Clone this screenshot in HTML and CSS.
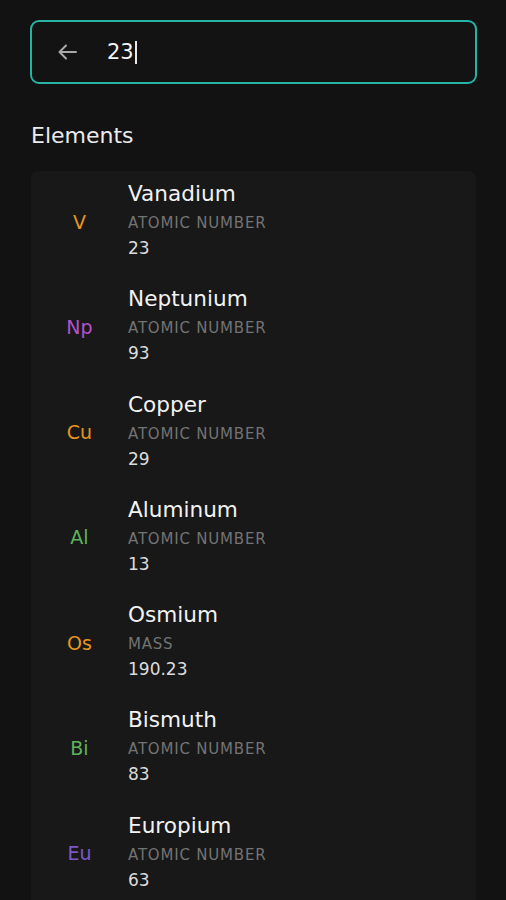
FILE: index.html
```html
<!DOCTYPE html>
<html lang="en">
<head>
<meta charset="utf-8">
<title>Elements search</title>
<link rel="stylesheet" href="styles.css">
</head>
<body>
<div class="page">
  <div class="search">
    <svg class="back" width="22" height="22" viewBox="0 0 22 22" aria-hidden="true">
      <path d="M20 11H3.5M10 4.5L3.5 11L10 17.5" fill="none" stroke="#a9a9a9" stroke-width="2" stroke-linecap="round" stroke-linejoin="round"/>
    </svg>
    <div class="query">23<span class="caret"></span></div>
  </div>

  <h2 class="heading">Elements</h2>

  <div class="card">
    <div class="row">
      <div class="sym orange">V</div>
      <div class="info">
        <div class="name">Vanadium</div>
        <div class="label">ATOMIC NUMBER</div>
        <div class="value">23</div>
      </div>
    </div>
    <div class="row">
      <div class="sym purple">Np</div>
      <div class="info">
        <div class="name">Neptunium</div>
        <div class="label">ATOMIC NUMBER</div>
        <div class="value">93</div>
      </div>
    </div>
    <div class="row">
      <div class="sym orange">Cu</div>
      <div class="info">
        <div class="name">Copper</div>
        <div class="label">ATOMIC NUMBER</div>
        <div class="value">29</div>
      </div>
    </div>
    <div class="row">
      <div class="sym green">Al</div>
      <div class="info">
        <div class="name">Aluminum</div>
        <div class="label">ATOMIC NUMBER</div>
        <div class="value">13</div>
      </div>
    </div>
    <div class="row">
      <div class="sym orange">Os</div>
      <div class="info">
        <div class="name">Osmium</div>
        <div class="label">MASS</div>
        <div class="value">190.23</div>
      </div>
    </div>
    <div class="row">
      <div class="sym green">Bi</div>
      <div class="info">
        <div class="name">Bismuth</div>
        <div class="label">ATOMIC NUMBER</div>
        <div class="value">83</div>
      </div>
    </div>
    <div class="row">
      <div class="sym violet">Eu</div>
      <div class="info">
        <div class="name">Europium</div>
        <div class="label">ATOMIC NUMBER</div>
        <div class="value">63</div>
      </div>
    </div>
  </div>
</div>
</body>
</html>
```

FILE: styles.css
```css
html, body {
  margin: 0;
  padding: 0;
  background: #121212;
  overflow: hidden;
  height: 100%;
}

body {
  font-family: "DejaVu Sans", "Noto Sans", sans-serif;
  color: #f0f0f0;
}

.page {
  padding: 20px 29px 0 30px;
}

.search {
  height: 64px;
  box-sizing: border-box;
  border: 2px solid #27b3a4;
  border-radius: 9px;
  background: #131313;
  display: flex;
  align-items: center;
  padding-left: 24px;
}

.back {
  display: block;
  flex: none;
}

.query {
  margin-left: 29px;
  font-size: 21px;
  line-height: 24px;
  color: #f4f4f4;
  display: flex;
  align-items: center;
}

.caret {
  display: inline-block;
  width: 2px;
  height: 23px;
  background: #e8e8e8;
  margin-left: 1px;
}

.heading {
  margin: 38px 0 0 1px;
  font-size: 22px;
  line-height: 28px;
  font-weight: normal;
  color: #ececec;
}

.card {
  margin-top: 21px;
  background: #181818;
  border-radius: 7px;
  padding: 1px 0 40px 0;
  margin-left: 1px;
  margin-right: 1px;
}

.row {
  display: flex;
  align-items: center;
  padding: 8px 0;
  margin-bottom: 10.3px;
}

.sym {
  width: 97px;
  flex: none;
  text-align: center;
  font-size: 19px;
  line-height: 24px;
  padding-top: 4px;
}

.orange { color: #e5961f; }
.purple { color: #b552cc; }
.green { color: #5db35c; }
.violet { color: #7c59c6; }

.info {
  display: flex;
  flex-direction: column;
}

.name {
  font-size: 21.6px;
  line-height: 28px;
  color: #f2f2f2;
}

.label {
  margin-top: 5px;
  font-size: 15px;
  letter-spacing: 0.8px;
  line-height: 20px;
  color: #737373;
}

.value {
  margin-top: 4px;
  font-size: 17px;
  line-height: 22px;
  color: #dcdcdc;
}
```
